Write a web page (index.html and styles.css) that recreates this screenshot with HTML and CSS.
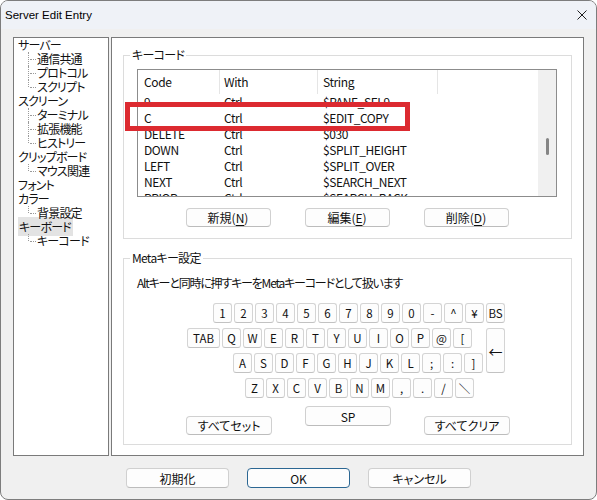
FILE: index.html
```html
<!DOCTYPE html>
<html lang="ja">
  <head>
    <meta charset="UTF-8" />
    <title>Server Edit Entry</title>
    <link rel="stylesheet" href="styles.css">
  </head>
  <body>
    <div class="window">
      <div class="titlebar">
        <span class="title">Server Edit Entry</span>
        <svg class="close" width="10" height="10" viewBox="0 0 10 10">
          <path d="M0.5 0.5 L9.5 9.5 M9.5 0.5 L0.5 9.5" stroke="#1f1f1f" stroke-width="1" fill="none" />
        </svg>
      </div>

      <div class="main">
        <!-- 左のツリー -->
        <div class="tree">
          <div class="node">サーバー</div>
          <div class="leaf">通信共通</div>
          <div class="leaf">プロトコル</div>
          <div class="leaf last">スクリプト</div>
          <div class="node">スクリーン</div>
          <div class="leaf">ターミナル</div>
          <div class="leaf">拡張機能</div>
          <div class="leaf last">ヒストリー</div>
          <div class="node">クリップボード</div>
          <div class="leaf last">マウス関連</div>
          <div class="node">フォント</div>
          <div class="node">カラー</div>
          <div class="leaf last">背景設定</div>
          <div class="node sel"><span>キーボード</span></div>
          <div class="leaf last">キーコード</div>
        </div>

        <div class="pane">
          <!-- キーコード -->
          <div class="group keycode">
            <span class="group-title">キーコード</span>
            <div class="list">
              <div class="list-body">
                <div class="list-head">
                  <span class="c1">Code</span><span class="c2">With</span><span class="c3">String</span>
                </div>
                <div class="list-row"><span class="c1">9</span><span class="c2">Ctrl</span><span class="c3">$PANE_SEL9</span></div>
                <div class="list-row"><span class="c1">C</span><span class="c2">Ctrl</span><span class="c3">$EDIT_COPY</span></div>
                <div class="list-row"><span class="c1">DELETE</span><span class="c2">Ctrl</span><span class="c3">$030</span></div>
                <div class="list-row"><span class="c1">DOWN</span><span class="c2">Ctrl</span><span class="c3">$SPLIT_HEIGHT</span></div>
                <div class="list-row"><span class="c1">LEFT</span><span class="c2">Ctrl</span><span class="c3">$SPLIT_OVER</span></div>
                <div class="list-row"><span class="c1">NEXT</span><span class="c2">Ctrl</span><span class="c3">$SEARCH_NEXT</span></div>
                <div class="list-row"><span class="c1">PRIOR</span><span class="c2">Ctrl</span><span class="c3">$SEARCH_BACK</span></div>
              </div>
              <div class="vscroll"><div class="thumb"></div></div>
            </div>
            <div class="btn-row">
              <button class="btn">新規(<u>N</u>)</button>
              <button class="btn">編集(<u>E</u>)</button>
              <button class="btn">削除(<u>D</u>)</button>
            </div>
            <div class="mark"></div>
          </div>

          <!-- Metaキー設定 -->
          <div class="group meta">
            <span class="group-title">Metaキー設定</span>
            <p class="desc">Altキーと同時に押すキーをMetaキーコードとして扱います</p>
            <div class="keyboard">
              <div class="kb-row r1">
                <span class="key">1</span><span class="key">2</span><span class="key">3</span><span class="key">4</span>
                <span class="key">5</span><span class="key">6</span><span class="key">7</span><span class="key">8</span>
                <span class="key">9</span><span class="key">0</span><span class="key">-</span><span class="key">^</span>
                <span class="key">¥</span><span class="key">BS</span>
              </div>
              <div class="kb-mid">
                <div class="kb-col">
                  <div class="kb-row r2">
                    <span class="key tab">TAB</span>
                    <span class="key">Q</span><span class="key">W</span><span class="key">E</span><span class="key">R</span>
                    <span class="key">T</span><span class="key">Y</span><span class="key">U</span><span class="key">I</span>
                    <span class="key">O</span><span class="key">P</span><span class="key">@</span><span class="key">[</span>
                  </div>
                  <div class="kb-row r3">
                    <span class="key">A</span><span class="key">S</span><span class="key">D</span><span class="key">F</span>
                    <span class="key">G</span><span class="key">H</span><span class="key">J</span><span class="key">K</span>
                    <span class="key">L</span><span class="key">;</span><span class="key">:</span><span class="key">]</span>
                  </div>
                </div>
                <span class="key enter">←</span>
              </div>
              <div class="kb-row r4">
                <span class="key">Z</span><span class="key">X</span><span class="key">C</span><span class="key">V</span>
                <span class="key">B</span><span class="key">N</span><span class="key">M</span><span class="key">,</span>
                <span class="key">.</span><span class="key">/</span><span class="key">＼</span>
              </div>
              <div class="kb-bottom">
                <button class="btn side">すべてセット</button>
                <button class="btn space">SP</button>
                <button class="btn side">すべてクリア</button>
              </div>
            </div>
          </div>
        </div>
      </div>

      <div class="footer">
        <button class="btn wide">初期化</button>
        <button class="btn wide default">OK</button>
        <button class="btn wide">キャンセル</button>
      </div>
    </div>
  </body>
</html>
```

FILE: styles.css
```css
body {
  margin: 0;
  font-family: "Noto Sans CJK JP", sans-serif;
  font-feature-settings: "palt";
  font-size: 12px;
  color: #111;
}

.window {
  width: 597px;
  height: 500px;
  box-sizing: border-box;
  border: 1px solid #7d7d7d;
  border-radius: 8px;
  background-color: #f0f0f0;
  overflow: hidden;
}

.titlebar {
  height: 28px;
  display: flex;
  align-items: center;
  justify-content: space-between;
  padding: 0 9px 0 4px;
  background-color: #eff2f7;
}

.title {
  font-family: "Liberation Sans", sans-serif;
  font-size: 11.5px;
  color: #000;
}

.main {
  display: flex;
  gap: 2px;
  padding: 8px 0 0 12px;
}

/* ツリー */
.tree {
  width: 96px;
  height: 419px;
  box-sizing: border-box;
  border: 1px solid #7a7a7a;
  background-color: #fff;
  line-height: 14px;
  letter-spacing: -0.8px;
  white-space: nowrap;
}

.node {
  padding-left: 4px;
}

.node.sel span {
  background-color: #e3e3e3;
  padding: 1px 2px 1px 1px;
}

.leaf {
  position: relative;
  padding-left: 23px;
}

.leaf::before {
  content: "";
  position: absolute;
  left: 14px;
  top: 0;
  bottom: 0;
  border-left: 1px dotted #9a9a9a;
}

.leaf.last::before {
  bottom: 7px;
}

.leaf::after {
  content: "";
  position: absolute;
  left: 16px;
  top: 7px;
  width: 6px;
  border-top: 1px dotted #9a9a9a;
}

/* 右パネル */
.pane {
  width: 473px;
  height: 419px;
  box-sizing: border-box;
  border: 1px solid #7a7a7a;
  background-color: #fff;
  padding: 17px 11px 0;
}

.group {
  position: relative;
  border: 1px solid #dcdcdc;
}

.group-title {
  position: absolute;
  top: -8px;
  left: 6px;
  padding: 0 2px;
  background-color: #fff;
  line-height: 14px;
  letter-spacing: -0.7px;
}

.keycode {
  padding: 13px 14px 11px 13px;
}

.list {
  height: 128px;
  box-sizing: border-box;
  border: 1px solid #8c8c8c;
  display: flex;
}

.list-body {
  flex: 1;
  overflow: hidden;
  letter-spacing: -0.4px;
}

.list-head,
.list-row {
  display: flex;
  white-space: nowrap;
}

.list-head {
  height: 24px;
  line-height: 24px;
}

.list-head span {
  border-right: 1px solid #e5e5e5;
}

.list-row {
  height: 16px;
  line-height: 16px;
}

.c1,
.c2,
.c3 {
  box-sizing: border-box;
}

.c1 {
  width: 82px;
  padding-left: 6px;
}

.c2 {
  width: 98px;
  padding-left: 4px;
}

.c3 {
  width: 120px;
  padding-left: 5px;
}

.vscroll {
  width: 18px;
  background-color: #f0f0f0;
}

.thumb {
  width: 3px;
  height: 17px;
  margin: 68px 0 0 8px;
  border-radius: 2px;
  background-color: #858585;
}

.btn-row {
  display: flex;
  justify-content: center;
  gap: 34px;
  margin-top: 11px;
}

.btn {
  font-family: inherit;
  font-feature-settings: "palt";
  font-size: 12px;
  color: #111;
  width: 85px;
  height: 19px;
  padding: 0;
  line-height: 17px;
  background-color: #fdfdfd;
  border: 1px solid #d0d0d0;
  border-bottom-color: #bcbcbc;
  border-radius: 4px;
}

.btn u {
  text-underline-offset: 2px;
}

/* 赤い注釈枠 */
.mark {
  position: absolute;
  left: 1px;
  top: 46px;
  width: 285px;
  height: 29px;
  box-sizing: border-box;
  border: 5px solid #dc2a30;
}

.meta {
  margin-top: 19px;
  padding: 16px 0 9px;
}

.desc {
  margin: 0;
  padding-left: 13px;
  line-height: 16px;
  letter-spacing: -1.2px;
}

.keyboard {
  margin-top: 12px;
}

.kb-row {
  display: flex;
  gap: 2px;
}

.key {
  width: 19px;
  height: 20px;
  box-sizing: border-box;
  display: flex;
  align-items: center;
  justify-content: center;
  border: 1px solid #d4d4d4;
  border-bottom-color: #c2c2c2;
  border-radius: 3px;
  background-color: #fdfdfd;
  font-size: 11.5px;
}

.key.tab {
  width: 33px;
}

.r1 {
  margin-left: 89px;
}

.kb-mid {
  display: flex;
  gap: 3px;
  margin: 5px 0 0 63px;
}

.kb-col {
  display: flex;
  flex-direction: column;
  gap: 5px;
}

.r3 {
  margin-left: 46px;
}

.key.enter {
  height: 45px;
  font-size: 14px;
}

.r4 {
  margin: 5px 0 0 121px;
}

.kb-bottom {
  display: flex;
  align-items: flex-start;
  gap: 33px;
  margin: 8px 0 0 62px;
}

.btn.side {
  width: 86px;
  margin-top: 10px;
}

.btn.space {
  width: 86px;
  height: 20px;
}

.footer {
  display: flex;
  justify-content: center;
  gap: 18px;
  margin-top: 12px;
}

.btn.wide {
  width: 103px;
  height: 20px;
}

.btn.default {
  border: 1px solid #2c6793;
}
```
